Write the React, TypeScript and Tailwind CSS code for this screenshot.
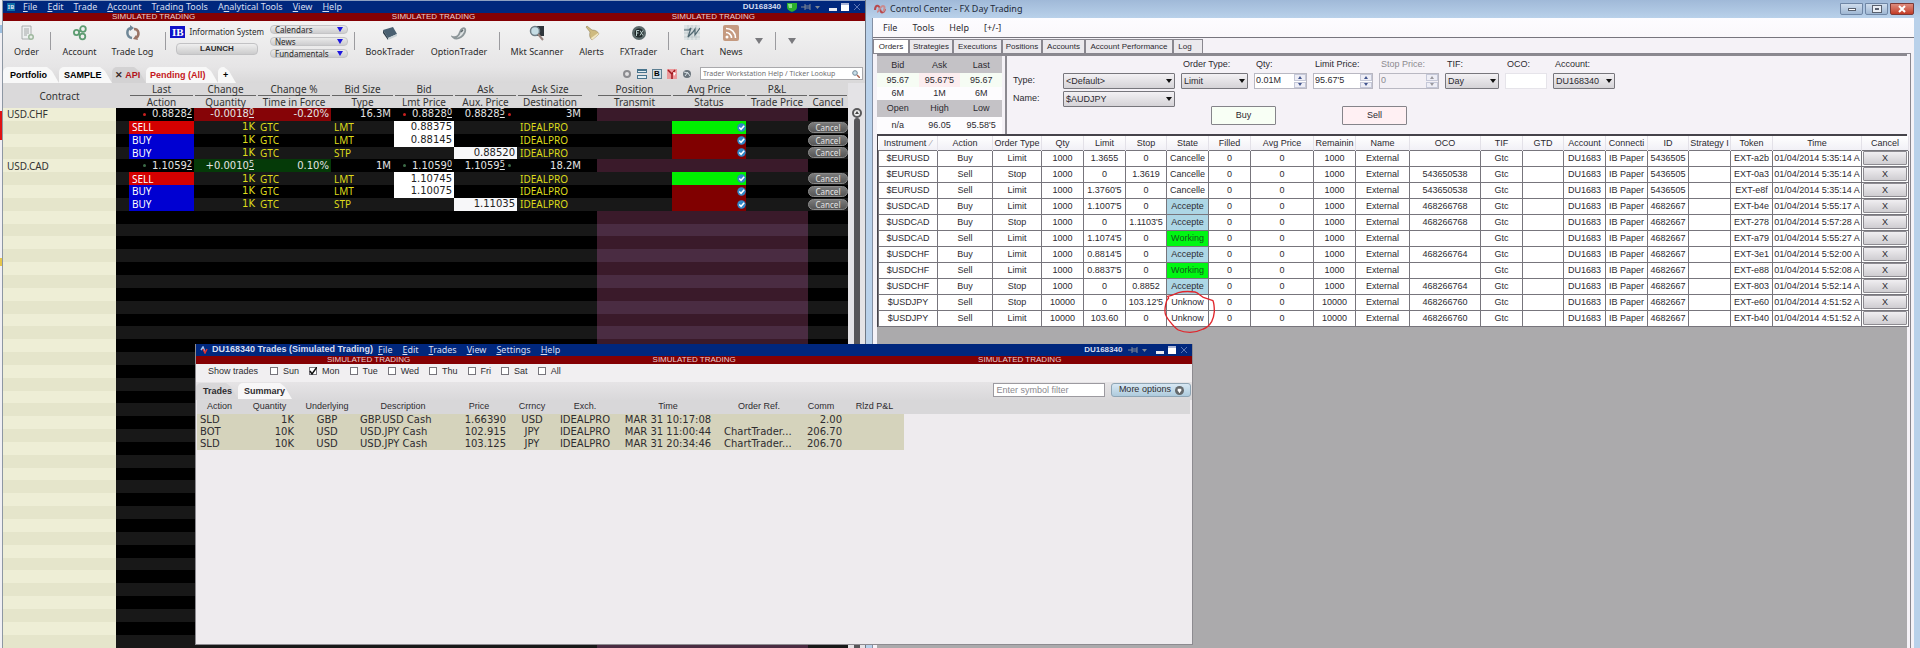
import type { ReactNode } from "react";
import clsx from "clsx";

/* ---------- data ---------- */

const watchColumns = [
  { top: "Last", bottom: "Action", width: "w-[65px]" },
  { top: "Change", bottom: "Quantity", width: "w-[63px]" },
  { top: "Change %", bottom: "Time in Force", width: "w-[74px]" },
  { top: "Bid Size", bottom: "Type", width: "w-[63px]" },
  { top: "Bid", bottom: "Lmt Price", width: "w-[60px]" },
  { top: "Ask", bottom: "Aux. Price", width: "w-[63px]" },
  { top: "Ask Size", bottom: "Destination", width: "w-[66px]" },
  { top: "", bottom: "", width: "w-[14px]" },
  { top: "Position", bottom: "Transmit", width: "w-[75px]" },
  { top: "Avg Price", bottom: "Status", width: "w-[74px]" },
  { top: "P&L", bottom: "Trade Price", width: "w-[62px]" },
  { top: " ", bottom: "Cancel", width: "w-[40px]" },
];

type Quote = {
  kind: "quote";
  symbol: string;
  up: boolean;
  last: string[];
  change: string[];
  pct: string;
  bidSize: string;
  bid: string[];
  ask: string[];
  askSize: string;
};
type Order = { kind: "order"; action: string; type: string; lmt?: string; aux?: string; working?: boolean };
type Blank = { kind: "blank" };

const watchRows: (Quote | Order | Blank)[] = [
  { kind: "quote", symbol: "USD.CHF", up: false, last: ["0.8828", "2"], change: ["-0.0018", "0"], pct: "-0.20%", bidSize: "16.3M", bid: ["0.8828", "0"], ask: ["0.8828", "5"], askSize: "3M" },
  { kind: "order", action: "SELL", type: "LMT", lmt: "0.88375", working: true },
  { kind: "order", action: "BUY", type: "LMT", lmt: "0.88145" },
  { kind: "order", action: "BUY", type: "STP", aux: "0.88520" },
  { kind: "quote", symbol: "USD.CAD", up: true, last: ["1.1059", "2"], change: ["+0.0010", "5"], pct: "0.10%", bidSize: "1M", bid: ["1.1059", "0"], ask: ["1.1059", "5"], askSize: "18.2M" },
  { kind: "order", action: "SELL", type: "LMT", lmt: "1.10745", working: true },
  { kind: "order", action: "BUY", type: "LMT", lmt: "1.10075" },
  { kind: "order", action: "BUY", type: "STP", aux: "1.11035" },
  ...Array.from({ length: 34 }, (): Blank => ({ kind: "blank" })),
];

const orderColumns = [
  { label: "Instrument", width: "w-[59px]" },
  { label: "Action", width: "w-[55px]" },
  { label: "Order Type", width: "w-[49px]" },
  { label: "Qty", width: "w-[42px]" },
  { label: "Limit", width: "w-[42px]" },
  { label: "Stop", width: "w-[41px]" },
  { label: "State", width: "w-[42px]" },
  { label: "Filled", width: "w-[42px]" },
  { label: "Avg Price", width: "w-[63px]" },
  { label: "Remainin", width: "w-[42px]" },
  { label: "Name", width: "w-[54px]" },
  { label: "OCO", width: "w-[71px]" },
  { label: "TIF", width: "w-[42px]" },
  { label: "GTD", width: "w-[41px]" },
  { label: "Account", width: "w-[42px]" },
  { label: "Connecti", width: "w-[42px]" },
  { label: "ID", width: "w-[41px]" },
  { label: "Strategy I", width: "w-[42px]" },
  { label: "Token", width: "w-[42px]" },
  { label: "Time", width: "w-[89px]" },
  { label: "Cancel", width: "w-[47px]" },
];

// instrument, action, type, qty, limit, stop, state, oco, id, token, time
const orders = [
  ["$EURUSD", "Buy", "Limit", "1000", "1.3655", "0", "Cancelle", "", "5436505", "EXT-a2b", "5:35:14"],
  ["$EURUSD", "Sell", "Stop", "1000", "0", "1.3619", "Cancelle", "543650538", "5436505", "EXT-0a3", "5:35:14"],
  ["$EURUSD", "Sell", "Limit", "1000", "1.3760'5", "0", "Cancelle", "543650538", "5436505", "EXT-e8f", "5:35:14"],
  ["$USDCAD", "Buy", "Limit", "1000", "1.1007'5", "0", "Accepte", "468266768", "4682667", "EXT-b4e", "5:55:17"],
  ["$USDCAD", "Buy", "Stop", "1000", "0", "1.1103'5", "Accepte", "468266768", "4682667", "EXT-278", "5:57:28"],
  ["$USDCAD", "Sell", "Limit", "1000", "1.1074'5", "0", "Working", "", "4682667", "EXT-a79", "5:55:27"],
  ["$USDCHF", "Buy", "Limit", "1000", "0.8814'5", "0", "Accepte", "468266764", "4682667", "EXT-3e1", "5:52:00"],
  ["$USDCHF", "Sell", "Limit", "1000", "0.8837'5", "0", "Working", "", "4682667", "EXT-e88", "5:52:08"],
  ["$USDCHF", "Buy", "Stop", "1000", "0", "0.8852", "Accepte", "468266764", "4682667", "EXT-803", "5:52:14"],
  ["$USDJPY", "Sell", "Stop", "10000", "0", "103.12'5", "Unknow", "468266760", "4682667", "EXT-e60", "4:51:52"],
  ["$USDJPY", "Sell", "Limit", "10000", "103.60", "0", "Unknow", "468266760", "4682667", "EXT-b40", "4:51:52"],
];

const tradeColumns = [
  { label: "Action", width: "w-[45px]", cell: "text-left pl-[3px]" },
  { label: "Quantity", width: "w-[55px]", cell: "text-right pr-[3px]" },
  { label: "Underlying", width: "w-[60px]", cell: "text-center" },
  { label: "Description", width: "w-[92px]", cell: "text-left pl-[3px]" },
  { label: "Price", width: "w-[60px]", cell: "text-right pr-[3px]" },
  { label: "Crrncy", width: "w-[46px]", cell: "text-center" },
  { label: "Exch.", width: "w-[60px]", cell: "text-center" },
  { label: "Time", width: "w-[106px]", cell: "text-center" },
  { label: "Order Ref.", width: "w-[76px]", cell: "text-left pl-[3px]" },
  { label: "Comm", width: "w-[48px]", cell: "text-right pr-[3px]" },
  { label: "Rlzd P&L", width: "w-[59px]", cell: "text-center" },
];

const trades = [
  ["SLD", "1K", "GBP", "GBP.USD Cash", "1.66390", "USD", "IDEALPRO", "MAR 31 10:17:08", "", "2.00", ""],
  ["BOT", "10K", "USD", "USD.JPY Cash", "102.915", "JPY", "IDEALPRO", "MAR 31 11:00:44", "ChartTrader...", "206.70", ""],
  ["SLD", "10K", "USD", "USD.JPY Cash", "103.125", "JPY", "IDEALPRO", "MAR 31 20:34:46", "ChartTrader...", "206.70", ""],
];

/* ---------- shared bits ---------- */

function MenuItem({ label, at = 0 }: { label: string; at?: number }) {
  return (
    <button className="whitespace-nowrap">
      {label.slice(0, at)}
      <span className="underline">{label[at]}</span>
      {label.slice(at + 1)}
    </button>
  );
}

function SimulatedBar({ className }: { className: string }) {
  return (
    <div className={clsx("flex h-2 shrink-0 justify-between bg-[#840003] font-['Liberation_Sans',sans-serif] text-[8px] leading-2 text-[#e8cfd0]", className)}>
      <span>SIMULATED TRADING</span>
      <span>SIMULATED TRADING</span>
      <span>SIMULATED TRADING</span>
    </div>
  );
}

function WindowControls() {
  return (
    <div className="flex items-center gap-1">
      <svg viewBox="0 0 20 8" className="mr-1 h-2 w-5" fill="none" stroke="#7f8794">
        <path d="M0 4h4M4 1v6M4 3h5M4 5h5M9 1v6" />
        <path d="M14 3h5l-2.500 3z" fill="#7f8794" stroke="none" />
      </svg>
      <button aria-label="Minimize" className="flex h-2 w-2 items-end">
        <span className="h-[3px] w-full bg-[#e9eaf2]" />
      </button>
      <button aria-label="Maximize" className="size-2 border-t-2 border-[#aab4d4] bg-white" />
      <button aria-label="Close">
        <svg viewBox="0 0 8 8" className="size-2" stroke="#5d76b4" fill="none">
          <path d="M1 1l6 6M7 1L1 7" />
        </svg>
      </button>
    </div>
  );
}

/* ---------- TWS window ---------- */

const iconOrder = (
  <svg viewBox="0 0 16 16" className="size-4">
    <path d="M3 1h9v13H3z" fill="#eef0f0" stroke="#9aa0a0" strokeWidth=".8" />
    <path d="M5 4h5M5 6h5M5 8h5M5 10h3" stroke="#8f9494" strokeWidth=".8" />
    <circle cx="12" cy="12" r="3" fill="#9fb99f" />
    <path d="M10.500 12h3M12 10.500v3" stroke="#fff" />
  </svg>
);
const iconAccount = (
  <svg viewBox="0 0 16 16" className="size-4" fill="none" stroke="#5d9c71" strokeWidth="1.800">
    <circle cx="4.500" cy="7.500" r="2.600" />
    <circle cx="11" cy="4" r="2.800" />
    <circle cx="10.500" cy="11.500" r="2.800" />
    <path d="M7 6.500l2-1M6.500 9l2 1" />
  </svg>
);
const iconTradeLog = (
  <svg viewBox="0 0 16 16" className="size-4" fill="none" strokeWidth="2.500">
    <path d="M7 13C1 12 1 4 6 3" stroke="#6f8797" />
    <path d="M5 0l4 3-4 3z" fill="#6f8797" />
    <path d="M9 4c5 0 6 6 2 9" stroke="#9b7466" />
    <path d="M13 15l-5-1 3-4z" fill="#9b7466" />
  </svg>
);
const iconBook = (
  <svg viewBox="0 0 16 16" className="size-4">
    <path d="M1 5l10-3 4 7-9 4z" fill="#4a6071" />
    <path d="M1 5l5 8v2L1 8z" fill="#2d3e4b" />
    <path d="M6 13l9-4v2l-9 4z" fill="#c9d2d6" />
  </svg>
);
const iconOption = (
  <svg viewBox="0 0 16 16" className="size-4" fill="none">
    <path d="M2 12c4 1 6-2 7-5s4-5 5-3-1 6-4 8-6 2-8 0z" stroke="#8d9699" strokeWidth="1.800" fill="#dfe3e4" />
    <path d="M10 7l2-2" stroke="#5f696d" strokeWidth="1.500" />
  </svg>
);
const iconScanner = (
  <svg viewBox="0 0 16 16" className="size-4">
    <path d="M6 1h9v10H8z" fill="#2f363b" />
    <circle cx="6" cy="6" r="4.500" fill="#c5dce4" stroke="#6e7d86" strokeWidth="1.500" />
    <path d="M9 9l5 6" stroke="#97837e" strokeWidth="2" />
  </svg>
);
const iconAlerts = (
  <svg viewBox="0 0 16 16" className="size-4">
    <path d="M3 1l5 4c4 0 6 2 7 4l-7 6c-2-2-3-4-2-8L2 2z" fill="#cfbb80" stroke="#94835a" strokeWidth=".6" />
    <path d="M15 9l-7 6-1-2 7-5z" fill="#f1e6c1" />
  </svg>
);
const iconFx = (
  <svg viewBox="0 0 16 16" className="size-4">
    <circle cx="8" cy="8" r="7" fill="#5c6a6b" />
    <circle cx="8" cy="8" r="4.500" fill="#20292a" />
    <path d="M5.500 11V5.500h2.500M5.500 8h2M9 5.500l3 5M12 5.500l-3 5" stroke="#bcd0cd" fill="none" />
  </svg>
);
const iconChart = (
  <svg viewBox="0 0 16 16" className="size-4">
    <path d="M0 0h16v15H0z" fill="#dde3e5" />
    <path d="M0 4h16M0 8h16M0 12h16M4 0v15M8 0v15M12 0v15" stroke="#a9b6bb" strokeWidth=".5" />
    <path d="M0 5h5l2-2-3 9 5-5 2-3v6l5-7" stroke="#4f6771" fill="none" strokeWidth="1.200" />
  </svg>
);
const iconNews = (
  <svg viewBox="0 0 16 16" className="size-4">
    <rect width="16" height="16" rx="2" fill="#c59a80" />
    <circle cx="4" cy="12" r="1.500" fill="#fff" />
    <path d="M3 7.500c3 0 5.500 2.500 5.500 5.500M3 3.500c5.500 0 9.500 4 9.500 9.500" stroke="#fff" strokeWidth="1.600" fill="none" />
  </svg>
);

function Tool({ icon, label, width }: { icon: ReactNode; label: string; width: string }) {
  return (
    <button className={clsx("flex shrink-0 flex-col items-center gap-[5px] pt-1", width)}>
      {icon}
      <span className="text-[9px] leading-3 whitespace-nowrap">{label}</span>
    </button>
  );
}

function Divider() {
  return <div className="mt-[11px] h-[18px] w-px shrink-0 bg-[#9b9b9f]" />;
}

function MoreArrow({ width }: { width: string }) {
  return (
    <button aria-label="More tools" className={clsx("flex h-10 shrink-0 items-center justify-center", width)}>
      <svg viewBox="0 0 8 6" className="h-[6px] w-2">
        <path d="M0 0h8L4 6z" fill="#7a7a7e" />
      </svg>
    </button>
  );
}

function Toolbar() {
  return (
    <div className="flex h-[46px] shrink-0 overflow-hidden bg-linear-to-b from-[#f3f3f3] to-[#e6e5e6] text-[#2b2b2b]">
      <Tool icon={iconOrder} label="Order" width="w-[47px]" />
      <Divider />
      <Tool icon={iconAccount} label="Account" width="w-[57px]" />
      <Tool icon={iconTradeLog} label="Trade Log" width="w-[49px]" />
      <div className="w-2 shrink-0" />
      <Divider />
      <div className="flex w-[98px] shrink-0 flex-col gap-[5px] pt-[5px] pl-1">
        <div className="flex items-center gap-1">
          <span className="h-3 w-4 bg-[#0f12c8] text-center font-['Liberation_Serif',serif] text-[11px] leading-3 font-bold text-white">IB</span>
          <span className="text-[8px] leading-3 whitespace-nowrap">Information System</span>
        </div>
        <button className="ml-[6px] h-3 w-[82px] rounded border border-[#c2c2c4] bg-linear-to-b from-[#efefef] to-[#cccccd] font-['Liberation_Sans',sans-serif] text-[8px] leading-[10px] font-bold">
          LAUNCH
        </button>
      </div>
      <div className="ml-[6px] flex w-[78px] shrink-0 flex-col gap-[3px] pt-1">
        {["Calendars", "News", "Fundamentals"].map((name) => (
          <button key={name} className="flex h-[9px] items-center justify-between rounded-sm border border-[#c4c4c6] bg-linear-to-b from-[#eaeaea] to-[#cdcdcf] px-1 text-[8px] leading-2">
            {name}
            <svg viewBox="0 0 6 5" className="h-[5px] w-[6px]">
              <path d="M0 0h6L3 5z" fill="#1d16e0" />
            </svg>
          </button>
        ))}
      </div>
      <div className="w-[6px] shrink-0" />
      <Divider />
      <Tool icon={iconBook} label="BookTrader" width="w-[70px]" />
      <Tool icon={iconOption} label="OptionTrader" width="w-[68px]" />
      <div className="w-[6px] shrink-0" />
      <Divider />
      <Tool icon={iconScanner} label="Mkt Scanner" width="w-[74px]" />
      <Tool icon={iconAlerts} label="Alerts" width="w-[35px]" />
      <Tool icon={iconFx} label="FXTrader" width="w-[59px]" />
      <Divider />
      <Tool icon={iconChart} label="Chart" width="w-[46px]" />
      <Tool icon={iconNews} label="News" width="w-[32px]" />
      <MoreArrow width="w-[24px]" />
      <div className="w-1 shrink-0" />
      <Divider />
      <MoreArrow width="w-[32px]" />
    </div>
  );
}

function SlantTab({ children, className }: { children: ReactNode; className: string }) {
  return (
    <button className={clsx("h-4 rounded-tl-[5px] text-left leading-4 font-bold whitespace-nowrap [clip-path:polygon(0_0,calc(100%-12px)_0,calc(100%-7px)_4px,100%_100%,0_100%)]", className)}>
      {children}
    </button>
  );
}

function PageTabs() {
  return (
    <div className="flex h-4 shrink-0 items-start bg-linear-to-b from-[#e6e5e6] to-[#d9d8d9]">
      <div className="flex font-['Liberation_Sans',sans-serif] text-[9px]">
        <SlantTab className="w-[56px] bg-[#f8f8f8] pl-[7px]">Portfolio</SlantTab>
        <SlantTab className="w-[53px] bg-[#f8f8f8] pl-[5px]">SAMPLE</SlantTab>
        <SlantTab className="w-[34px] bg-[#d3d2d3] pl-[3px] text-[#b3141b]">
          <span className="text-[#3a2a2a]">✕</span> API
        </SlantTab>
        <SlantTab className="w-[72px] bg-[#f8f8f8] pl-1 text-[#c4161c]">Pending (All)</SlantTab>
        <SlantTab className="w-[18px] bg-[#f8f8f8] pl-[5px]">+</SlantTab>
      </div>
      <div className="ml-auto flex items-center gap-[5px]">
        <svg viewBox="0 0 10 10" className="size-[10px]">
          <circle cx="5" cy="5" r="3" fill="none" stroke="#8b8b8f" strokeWidth="2" />
        </svg>
        <svg viewBox="0 0 10 10" className="size-[10px]">
          <path d="M0 0h10v4H0zM0 6h10v4H0z" fill="#49748d" />
          <path d="M1 2h8v1H1zM1 7h8v2H1z" fill="#e4eef2" />
        </svg>
        <span className="size-[10px] border border-[#5d7f92] bg-[#cfdde5] text-center font-['Liberation_Sans',sans-serif] text-[8px] leading-2 font-bold">B</span>
        <svg viewBox="0 0 10 10" className="size-[10px]">
          <path d="M0 0h10v10H0z" fill="#eb9a9c" />
          <path d="M1 1l4 4 3-4M5 5v5" stroke="#a3171e" strokeWidth="1.500" fill="none" />
          <path d="M6 3l3 1-2 3z" fill="#fff" />
        </svg>
        <svg viewBox="0 0 10 10" className="size-[10px]">
          <circle cx="5" cy="5" r="4" fill="#6a747c" />
          <path d="M2 3l4 1 2 3M3 7l3-4" stroke="#dbe3e8" fill="none" />
        </svg>
        <label className="mr-[2px] ml-[3px] flex h-[13px] w-[163px] items-center border border-[#a9a9ac] bg-white px-[2px]">
          <input
            aria-label="Ticker lookup"
            placeholder="Trader Workstation Help / Ticker Lookup"
            className="min-w-0 flex-1 text-[7px] leading-[11px] outline-none placeholder:text-[#707073]"
          />
          <svg viewBox="0 0 8 8" className="size-2">
            <circle cx="3" cy="3" r="2.300" fill="#cbe0ea" stroke="#72899a" />
            <path d="M5 5l3 3" stroke="#a9614f" strokeWidth="1.500" />
          </svg>
        </label>
      </div>
    </div>
  );
}

function Price({ parts }: { parts: string[] }) {
  return (
    <>
      {parts[0]}
      <span className="relative -top-[2px] text-[8px] leading-none underline underline-offset-2">{parts[1]}</span>
    </>
  );
}

function Dot({ up }: { up: boolean }) {
  return <span className={clsx("inline-block size-[3px] rounded-full align-middle", up ? "bg-[#3c6b47]" : "bg-[#c8201f]")} />;
}

function QuoteCells({ row }: { row: Quote }) {
  const change = row.up ? "bg-[#053a08]" : "bg-[#860407]";
  return (
    <>
      <td className="pr-[2px] text-right">
        <Dot up={row.up} /> <span className="pl-[3px]"><Price parts={row.last} /></span>
      </td>
      <td className={clsx("pr-[3px] text-right", change)}><Price parts={row.change} /></td>
      <td className={clsx("pr-[2px] text-right", change)}>{row.pct}</td>
      <td className="pr-[3px] text-right">{row.bidSize}</td>
      <td className="pr-[2px] text-right">
        <Dot up={row.up} /> <span className="pl-[3px]"><Price parts={row.bid} /></span>
      </td>
      <td className="pr-[6px] text-right">
        <Price parts={row.ask} /> <Dot up={row.up} />
      </td>
      <td className="pr-[2px] text-right">{row.askSize}</td>
      <td />
      <td colSpan={3} className="bg-[#3a1a2a]" />
      <td />
    </>
  );
}

function OrderCells({ row }: { row: Order }) {
  return (
    <>
      <td className={clsx("pl-[3px] font-['Noto_Sans',sans-serif] text-white", row.action === "SELL" ? "bg-[#d40000]" : "bg-[#0000d2]")}>{row.action}</td>
      <td className="pr-[2px] text-right">1K</td>
      <td className="pl-[3px] font-['Noto_Sans',sans-serif]">GTC</td>
      <td className="pl-[3px] font-['Noto_Sans',sans-serif]">{row.type}</td>
      <td className={clsx("pr-[2px] text-right text-[#222]", row.lmt && "bg-white")}>{row.lmt}</td>
      <td className={clsx("pr-[2px] text-right text-[#222]", row.aux && "bg-[#f7f7f9]")}>{row.aux}</td>
      <td className="pl-[3px] font-['Noto_Sans',sans-serif]">IDEALPRO</td>
      <td />
      <td />
      <td className={row.working ? "bg-[#00f000]" : "bg-[#800000]"}>
        <svg viewBox="0 0 10 10" className="ml-auto size-[9px]">
          <circle cx="5" cy="5" r="4.700" fill="#2f86c6" />
          <path d="M2.500 5l2 2L8 3" stroke="#fff" strokeWidth="1.700" fill="none" />
        </svg>
      </td>
      <td />
      <td>
        <button className="block h-[11px] w-full rounded-full border border-[#8b8b8b] bg-linear-to-b from-[#7b7b7b] to-[#555] text-center font-['Noto_Sans',sans-serif] text-[8px] leading-[9px] text-[#e4e4e4]">
          Cancel
        </button>
      </td>
    </>
  );
}

function Watchlist() {
  return (
    <div className="flex min-h-0 flex-1 overflow-hidden bg-[#dcdbdc]">
      <table className="h-full w-[845px] table-fixed border-collapse text-[10px] leading-3">
        <colgroup>
          <col className="w-[113px]" />
          <col className="w-[13px]" />
          {watchColumns.map((col, i) => (
            <col key={i} className={col.width} />
          ))}
        </colgroup>
        <thead className="bg-[#dad9da] text-[#333]">
          <tr className="h-3">
            <th rowSpan={2} className="p-0 font-normal">Contract</th>
            <th className="p-0" />
            {watchColumns.map((col, i) => (
              <th key={i} className="p-0 font-normal">
                {col.top && <div className="mx-px h-[13px] border-b border-[#666]">{col.top}</div>}
              </th>
            ))}
          </tr>
          <tr className="h-3">
            <th className="p-0" />
            {watchColumns.map((col, i) => (
              <th key={i} className="p-0 font-normal whitespace-nowrap">{col.bottom}</th>
            ))}
          </tr>
        </thead>
        <tbody className="font-['DejaVu_Sans',sans-serif] text-[#dedb1b] [&_td]:whitespace-nowrap">
          {watchRows.map((row, i) => (
            <tr key={i} className={clsx(i % 2 ? "bg-[#181818]" : "bg-black", row.kind === "quote" && "text-[#e4e4e4]")}>
              <td className={clsx("pl-1 font-['Noto_Sans',sans-serif] text-[#333]", i % 2 ? "bg-[#e5e5cb]" : "bg-[#eeeed6]")}>
                {row.kind === "quote" ? row.symbol : "\u00a0"}
              </td>
              <td />
              {row.kind === "quote" && <QuoteCells row={row} />}
              {row.kind === "order" && <OrderCells row={row} />}
              {row.kind === "blank" && (
                <>
                  <td colSpan={8} />
                  <td colSpan={3} className={i % 2 ? "bg-[#4a2c42]" : "bg-[#3a1a2a]"} />
                  <td />
                </>
              )}
            </tr>
          ))}
        </tbody>
      </table>
      {/* scroll bar */}
      <div className="flex flex-1 flex-col items-center bg-[#e4e3e6] pt-[25px]">
        <svg viewBox="0 0 10 10" className="size-[10px]">
          <circle cx="5" cy="5" r="4" fill="#eee" stroke="#59595b" strokeWidth="2" />
          <path d="M3 6h4L5 3z" fill="#444" />
        </svg>
        <div className="w-[6px] flex-1 rounded-t-full bg-[#565558]" />
      </div>
    </div>
  );
}

function TwsWindow() {
  return (
    <section className="flex min-w-0 overflow-hidden">
      {/* sliver of the window underneath */}
      <div className="w-[3px] shrink-0 border-r border-[#8d97a3] bg-[#f1f0f4]">
        <div className="mt-[25px] h-2 bg-[#9dbfe0]" />
        <div className="mt-[78px] h-[29px] bg-[#e01313]" />
        <div className="mt-[118px] h-2 bg-[#e6c64a]" />
      </div>
      <div className="flex min-w-0 flex-1 flex-col border-r border-[#6f7885] font-['Noto_Sans',sans-serif]">
        <header className="flex h-[13px] shrink-0 items-center border-t border-[#8ea0c2] bg-[#00277d] pr-1 pl-1 text-[9px] leading-3 text-[#d6def0]">
          <span className="size-2 bg-[#0c6da6] text-center text-[6px] leading-2 font-bold">IB</span>
          <nav className="flex gap-[10px] pl-2">
            <MenuItem label="File" />
            <MenuItem label="Edit" />
            <MenuItem label="Trade" />
            <MenuItem label="Account" />
            <MenuItem label="Trading Tools" at={1} />
            <MenuItem label="Analytical Tools" at={1} />
            <MenuItem label="View" />
            <MenuItem label="Help" />
          </nav>
          <span className="mr-[6px] ml-auto font-['Liberation_Sans',sans-serif] text-[8px] font-bold">DU168340</span>
          <svg viewBox="0 0 10 10" className="mr-1 size-[10px]">
            <path d="M0 1h10v4c0 3-3 4-5 5-2-1-5-2-5-5z" fill="#2cb02c" />
            <path d="M1 2h4v4H2z" fill="#8be38b" />
          </svg>
          <WindowControls />
        </header>
        <SimulatedBar className="pr-[110px] pl-[109px]" />
        <Toolbar />
        <PageTabs />
        <Watchlist />
      </div>
    </section>
  );
}

/* ---------- Control Center window ---------- */

function Picker({ id, value }: { id: string; value: string }) {
  return (
    <div className="relative">
      <select
        id={id}
        className="block h-4 w-full appearance-none rounded-[1px] border border-[#77767c] bg-linear-to-b from-[#f3f1f4] to-[#d5d3d7] pl-[2px] leading-[14px]"
      >
        <option>{value}</option>
      </select>
      <svg viewBox="0 0 6 4" className="pointer-events-none absolute top-[6px] right-[3px] h-1 w-[6px]">
        <path d="M0 0h6L3 4z" fill="#111" />
      </svg>
    </div>
  );
}

function Spinner({ id, value, disabled }: { id: string; value: string; disabled?: boolean }) {
  return (
    <div className={clsx("flex h-4 border border-[#b9b8c2]", disabled ? "bg-[#f3f0f5] text-[#8c8a90]" : "bg-white")}>
      <input id={id} defaultValue={value} disabled={disabled} className="min-w-0 flex-1 pl-px outline-none" />
      <div className="flex w-3 flex-col gap-px">
        {["M0 3h4L2 0z", "M0 0h4L2 3z"].map((d) => (
          <button key={d} aria-label="Step" disabled={disabled} className="flex flex-1 items-center justify-center border border-[#c5c8d8] bg-[#eeeef6]">
            <svg viewBox="0 0 4 3" className="h-[3px] w-1">
              <path d={d} fill={disabled ? "#99989e" : "#42568f"} />
            </svg>
          </button>
        ))}
      </div>
    </div>
  );
}

function Field({ id, label, width, muted, children }: { id: string; label: string; width: string; muted?: boolean; children: ReactNode }) {
  return (
    <div className={width}>
      <label htmlFor={id} className={clsx("block h-[17px] pt-[2px] pl-[2px] leading-3 whitespace-nowrap", muted && "text-[#8c8a90]")}>
        {label}
      </label>
      {children}
    </div>
  );
}

function QuotePanel() {
  return (
    <table className="w-[125px] shrink-0 table-fixed border-collapse bg-[#fdfcfe] text-center leading-3 [&_td]:p-0 [&_th]:p-0 [&_th]:font-normal">
      <tbody>
        <tr className="h-[17px] bg-[#c4c2c6]"><th>Bid</th><th>Ask</th><th>Last</th></tr>
        <tr className="h-[14px]"><td className="bg-[#f6fcf4]">95.67</td><td className="bg-[#fcedef]">95.67'5</td><td className="bg-[#f6fcf4]">95.67</td></tr>
        <tr className="h-[12px]"><td>6M</td><td>1M</td><td>6M</td></tr>
        <tr className="h-[17px] bg-[#c4c2c6]"><th>Open</th><th>High</th><th>Low</th></tr>
        <tr className="h-[17px]"><td>n/a</td><td>96.05</td><td>95.58'5</td></tr>
      </tbody>
    </table>
  );
}

function OrderEntry() {
  return (
    <div className="flex gap-[6px]">
      <div className="flex w-[162px] flex-col gap-[2px] pt-[17px]">
        <div className="grid grid-cols-[50px_1fr] items-center">
          <label htmlFor="type">Type:</label>
          <Picker id="type" value="<Default>" />
        </div>
        <div className="grid grid-cols-[50px_1fr] items-center">
          <label htmlFor="name">Name:</label>
          <Picker id="name" value="$AUDJPY" />
        </div>
      </div>
      <div>
        <div className="flex gap-[6px]">
          <Field id="order-type" label="Order Type:" width="w-[67px]"><Picker id="order-type" value="Limit" /></Field>
          <Field id="qty" label="Qty:" width="w-[53px]"><Spinner id="qty" value="0.01M" /></Field>
          <Field id="limit" label="Limit Price:" width="w-[60px]"><Spinner id="limit" value="95.67'5" /></Field>
          <Field id="stop" label="Stop Price:" width="w-[60px]" muted><Spinner id="stop" value="0" disabled /></Field>
          <Field id="tif" label="TIF:" width="w-[54px]"><Picker id="tif" value="Day" /></Field>
          <Field id="oco" label="OCO:" width="w-[42px]">
            <input id="oco" className="block h-4 w-full border border-[#e6e4ea] bg-white outline-none" />
          </Field>
          <Field id="account" label="Account:" width="w-[62px]"><Picker id="account" value="DU168340" /></Field>
        </div>
        <div className="mt-[17px] flex gap-[66px] pl-[30px]">
          <button className="h-[19px] w-[65px] rounded-[1px] border border-[#85848a] bg-[#f8fff5]">Buy</button>
          <button className="h-[19px] w-[65px] rounded-[1px] border border-[#85848a] bg-[#fff0f3]">Sell</button>
        </div>
      </div>
    </div>
  );
}

function stateColor(state: string) {
  if (state === "Accepte") return "bg-[#add6e5]";
  if (state === "Working") return "bg-[#00f712] text-[#12591a]";
  return "bg-white";
}

function OrdersTable() {
  return (
    <div className="relative border-t-2 border-l border-[#45434a]">
      <table className="w-full table-fixed border-collapse bg-white text-center leading-3 [&_td]:border [&_td]:border-[#77757c] [&_td]:p-0 [&_td]:whitespace-nowrap">
        <colgroup>
          {orderColumns.map((col) => (
            <col key={col.label} className={col.width} />
          ))}
        </colgroup>
        <thead>
          <tr className="h-[14px] bg-linear-to-b from-white to-[#f1f0f6]">
            {orderColumns.map((col, i) => (
              <th key={col.label} className="border-r border-[#e3e1e8] p-0 font-normal whitespace-nowrap">
                {col.label}
                {i === 0 && <span className="pl-1 text-[#9c9aa2]">⁄</span>}
              </th>
            ))}
          </tr>
        </thead>
        <tbody>
          {orders.map(([instrument, action, type, qty, limit, stop, state, oco, id, token, time]) => (
            <tr key={token} className="h-4">
              <td>{instrument}</td>
              <td>{action}</td>
              <td>{type}</td>
              <td>{qty}</td>
              <td>{limit}</td>
              <td>{stop}</td>
              <td className={stateColor(state)}>{state}</td>
              <td>0</td>
              <td>0</td>
              <td>{qty}</td>
              <td>External</td>
              <td>{oco}</td>
              <td>Gtc</td>
              <td />
              <td>DU1683</td>
              <td>IB Paper</td>
              <td>{id}</td>
              <td />
              <td>{token}</td>
              <td>01/04/2014 {time} A</td>
              <td>
                <button className="mx-auto block h-[14px] w-11 rounded-[1px] border border-[#8d8b91] bg-linear-to-b from-[#f0eef1] to-[#cfcdd1] leading-3">X</button>
              </td>
            </tr>
          ))}
        </tbody>
      </table>
      {/* red pen mark round the unknown states */}
      <svg viewBox="0 0 156 132" className="pointer-events-none absolute top-[154px] left-[285px] h-11 w-[52px]" fill="none" stroke="#e0262c" strokeWidth="4" strokeLinecap="round" strokeLinejoin="round">
        <path d="M11 32l6-8-3-5 12-3 20-8c14-4 34-4 50-2 10 2 14 10 25 16l29 10c4 10 4 22 4 33-1 12-4 22-8 30-6 10-14 18-25 22-12 6-24 10-40 10-14 0-24-2-35-7-10-6-18-16-25-25C12 84 6 76 6 65c-1-12 2-22 5-33" />
      </svg>
    </div>
  );
}

function ControlCenter() {
  return (
    <section className="flex min-w-0 flex-col overflow-hidden bg-linear-to-b from-[#a0b9d8] to-[#b9d1ea] to-[18px] pr-[6px] pl-[6px] font-['Liberation_Sans',sans-serif] text-[9px] text-[#2c2a30]">
      <header className="flex h-[18px] shrink-0 items-center gap-1 pl-[2px] font-['Noto_Sans',sans-serif] text-[#222a38]">
        <svg viewBox="0 0 12 10" className="h-[10px] w-3" fill="none" strokeWidth="2">
          <path d="M1 6c0-5 4-6 5-1s4 4 5 0" stroke="#b8484c" />
          <path d="M3 8c2 0 3-6 6-6 2 0 2 3 0 6" stroke="#c98c90" />
        </svg>
        <h1>Control Center - FX Day Trading</h1>
        <div className="ml-auto flex gap-[2px]">
          <button aria-label="Minimize" className="flex h-3 w-[23px] items-center justify-center rounded-b-[2px] border border-[#6f86a5] bg-linear-to-b from-[#cfdded] to-[#9fb7d3]">
            <span className="h-[3px] w-2 border border-[#59616f] bg-white" />
          </button>
          <button aria-label="Maximize" className="flex h-3 w-[23px] items-center justify-center rounded-b-[2px] border border-[#6f86a5] bg-linear-to-b from-[#cfdded] to-[#9fb7d3]">
            <span className="h-[6px] w-2 border-2 border-[#e9eef5] bg-[#59616f] outline outline-[#59616f]" />
          </button>
          <button aria-label="Close" className="flex h-3 w-6 items-center justify-center rounded-b-[2px] border border-[#7c3a37] bg-linear-to-b from-[#dd8b7d] to-[#c23a25]">
            <svg viewBox="0 0 8 8" className="size-2" stroke="#fff" strokeWidth="2">
              <path d="M1 1l6 6M7 1L1 7" />
            </svg>
          </button>
        </div>
      </header>
      <div className="flex min-h-0 flex-1 flex-col border-l border-[#8490a4] bg-[#f5f2f7]">
        <nav className="flex h-5 shrink-0 items-center gap-[15px] border-b border-[#77757d] bg-linear-to-b from-[#fdfcff] to-[#faf8fb] pl-[10px] font-['Noto_Sans',sans-serif]">
          <button>File</button>
          <button>Tools</button>
          <button>Help</button>
          <button>[+/-]</button>
        </nav>
        <div role="tablist" className="flex h-[15px] shrink-0 items-end text-[8px] leading-3 whitespace-nowrap [&>button]:h-[14px] [&>button]:border [&>button]:border-b-0 [&>button]:border-[#89878f]">
          <button className="w-[36px] bg-white">Orders</button>
          <button className="w-[44px] bg-[#ebe9ed]">Strategies</button>
          <button className="w-[49px] bg-[#ebe9ed]">Executions</button>
          <button className="w-[40px] bg-[#ebe9ed]">Positions</button>
          <button className="w-[43px] bg-[#ebe9ed]">Accounts</button>
          <button className="w-[88px] bg-[#ebe9ed]">Account Performance</button>
          <button className="w-[30px] bg-[#ebe9ed] pr-[6px]">Log</button>
        </div>
        <div className="mr-[3px] flex min-h-0 flex-1 flex-col border-t border-r border-[#89878f] pr-[3px] pl-1">
          <div className="flex h-20 shrink-0 gap-[3px] border-t-2 border-[#8b8990]">
            <QuotePanel />
            <div className="border-l-2 border-[#8b8990] pl-[6px]">
              <OrderEntry />
            </div>
          </div>
          <OrdersTable />
          <div className="flex-1 bg-[#abaaac]" />
        </div>
      </div>
    </section>
  );
}

/* ---------- Trades window ---------- */

function TradesWindow() {
  return (
    <section className="absolute top-[344px] bottom-[3px] left-[195px] flex w-[52%] flex-col border-r border-b border-l border-[#8d8b90] bg-[#eeebee] font-['Liberation_Sans',sans-serif] text-[9px] text-[#2e2c30]">
      <header className="flex h-3 shrink-0 items-center bg-[#00277d] px-1 text-[#d6def0]">
        <svg viewBox="0 0 8 8" className="mr-1 size-2" fill="none" strokeWidth="1.500">
          <path d="M1 4l2-3 2 5" stroke="#9fc3ee" />
          <path d="M3 3l2 4 2-4" stroke="#d33" />
        </svg>
        <h2 className="font-bold whitespace-nowrap">DU168340 Trades (Simulated Trading)</h2>
        <nav className="flex gap-[10px] pl-[5px] font-['Noto_Sans',sans-serif]">
          <MenuItem label="File" />
          <MenuItem label="Edit" />
          <MenuItem label="Trades" />
          <MenuItem label="View" />
          <MenuItem label="Settings" />
          <MenuItem label="Help" />
        </nav>
        <span className="mr-[6px] ml-auto text-[8px] font-bold">DU168340</span>
        <WindowControls />
      </header>
      <SimulatedBar className="pr-[131px] pl-[131px]" />
      <div className="flex h-[18px] shrink-0 items-start gap-[10px] bg-[#f1eff1] pt-px pl-3 leading-3">
        <span className="pr-[2px]">Show trades</span>
        {["Sun", "Mon", "Tue", "Wed", "Thu", "Fri", "Sat", "All"].map((day) => (
          <label key={day} className="relative flex items-center gap-[5px]">
            <input type="checkbox" defaultChecked={day === "Mon"} className="peer size-2 appearance-none border border-[#77757c] bg-white" />
            <svg viewBox="0 0 8 8" className="pointer-events-none absolute left-0 hidden size-2 peer-checked:block" fill="none" stroke="#111" strokeWidth="1.500">
              <path d="M1 4l2 3 5-7" />
            </svg>
            {day}
          </label>
        ))}
      </div>
      <div className="flex h-[18px] shrink-0 items-start bg-linear-to-b from-[#e6e4e6] to-[#d9d8da]">
        <SlantTab className="mt-px w-[42px] bg-[#d8d7d9] pl-[7px]">Trades</SlantTab>
        <SlantTab className="mt-px w-[54px] bg-[#f8f7f8] pl-[6px]">Summary</SlantTab>
        <input
          aria-label="Symbol filter"
          placeholder="Enter symbol filter"
          className="mt-px ml-auto h-[14px] w-28 border border-[#9c9aa0] bg-white pl-[2px] outline-none placeholder:text-[#8b898f]"
        />
        <button className="mt-px mr-px ml-[6px] flex h-[14px] w-20 items-center justify-center gap-1 rounded-[3px] border border-[#8fa5b5] bg-linear-to-b from-[#d8e8f3] to-[#aecbdd] whitespace-nowrap">
          More options
          <svg viewBox="0 0 10 10" className="size-[9px]">
            <circle cx="5" cy="5" r="5" fill="#65696c" />
            <path d="M3 3h4v2L5 8 3 5z" fill="#fff" />
          </svg>
        </button>
      </div>
      <table className="ml-px w-[707px] table-fixed border-collapse leading-3 whitespace-nowrap">
        <colgroup>
          {tradeColumns.map((col) => (
            <col key={col.label} className={col.width} />
          ))}
        </colgroup>
        <thead className="bg-[#d8d7d9] shadow-[286px_0_0_0_#d8d7d9]">
          <tr className="h-[14px] align-top">
            {tradeColumns.map((col) => (
              <th key={col.label} className="p-0 font-normal">{col.label}</th>
            ))}
          </tr>
        </thead>
        <tbody className="bg-[#d5d3bc] font-['DejaVu_Sans',sans-serif] text-[10px]">
          {trades.map((row, i) => (
            <tr key={i} className="h-3">
              {row.map((text, c) => (
                <td key={c} className={tradeColumns[c].cell}>{text}</td>
              ))}
            </tr>
          ))}
        </tbody>
      </table>
    </section>
  );
}

export default function App() {
  return (
    <main className="relative grid h-screen grid-cols-[433fr_527fr] grid-rows-[100%] overflow-hidden bg-[#aeb9c8]">
      <TwsWindow />
      <ControlCenter />
      <TradesWindow />
    </main>
  );
}
